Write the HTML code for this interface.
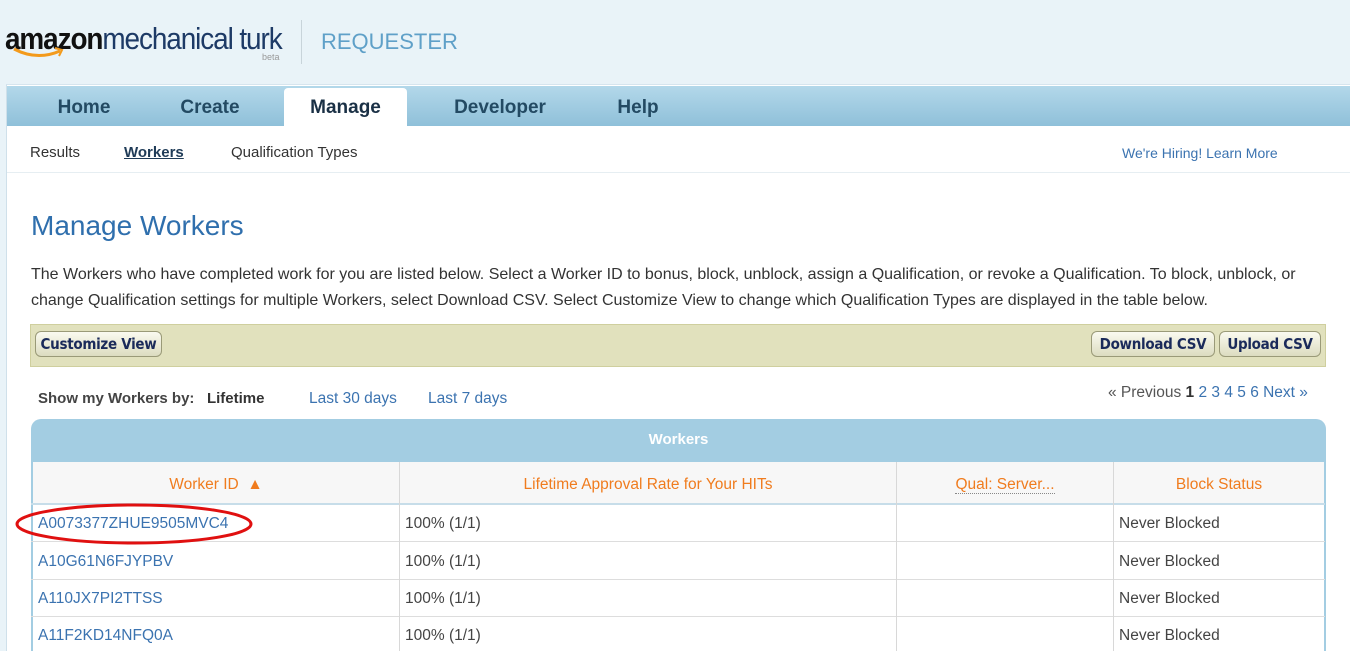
<!DOCTYPE html>
<html><head><style>
*{margin:0;padding:0;box-sizing:border-box}
body{width:1350px;height:651px;overflow:hidden;background:#e9f3f8;font-family:"Liberation Sans",Arial,sans-serif;position:relative}
.abs{position:absolute}
.panel{left:6px;top:84px;width:1344px;height:567px;background:#fff;border-left:1px solid #cfe0ea;border-top:1px solid #d6e5ee}
.nav{left:7px;top:86px;width:1343px;height:40px;background:linear-gradient(#b3d8ea,#8fc0d9)}
.tab{top:0;height:40px;line-height:44px;font-size:19px;font-weight:bold;color:#234a63;text-align:center}
.sub{font-size:15px;color:#333;top:144px}
.btn{top:331px;height:26px;border:1px solid #9a9a78;border-radius:6px;background:linear-gradient(#fafaf0,#dcdcc0);font-family:"DejaVu Sans Condensed","Liberation Sans Narrow",sans-serif;font-size:15px;color:#1a2a5a;line-height:24px;text-align:center;font-weight:bold;letter-spacing:-0.3px}
.td{font-size:15.5px;color:#444;}
.hl{position:absolute;height:1px;background:#c7dde9;left:31px;width:1294px}
.vl{position:absolute;width:1px;background:#d8d8d8;top:462px;height:189px}
.h{color:#f07c1e;font-size:15.5px;top:476px;text-align:center}
</style></head><body>
<div class="abs" style="left:5px;top:21px;font-size:31px;letter-spacing:-1.2px;font-weight:bold;color:#111;transform:scaleX(.9);transform-origin:left">amazon<span style="font-weight:normal;color:#1d3a66">mechanical turk</span></div>
<svg class="abs" style="left:12px;top:45px" width="60" height="16"><path d="M2 4 Q25 16 48 6" stroke="#f39a1c" stroke-width="3" fill="none"/><path d="M43 3 L50 5 L47 11" stroke="#f39a1c" stroke-width="2" fill="none"/></svg>
<div class="abs" style="left:262px;top:52px;font-size:9px;color:#999">beta</div>
<div class="abs" style="left:301px;top:20px;width:1px;height:44px;background:#c8d4da"></div>
<div class="abs" style="left:321px;top:29px;font-size:22px;color:#5fa0c8">REQUESTER</div>
<div class="abs panel"></div>
<div class="abs nav">
<div class="abs tab" style="left:30px;width:94px">Home</div>
<div class="abs tab" style="left:158px;width:90px">Create</div>
<div class="abs tab" style="left:277px;top:2px;height:38px;line-height:40px;width:123px;background:#fff;border-radius:4px 4px 0 0;color:#1a3045">Manage</div>
<div class="abs tab" style="left:430px;width:126px">Developer</div>
<div class="abs tab" style="left:600px;width:62px">Help</div>
</div>
<div class="abs sub" style="left:30px">Results</div>
<div class="abs sub" style="left:124px;font-weight:bold;text-decoration:underline;color:#1f3b57">Workers</div>
<div class="abs sub" style="left:231px">Qualification Types</div>
<div class="abs" style="left:1122px;top:145px;font-size:14px;color:#3b73b0">We're Hiring! Learn More</div>
<div class="abs" style="left:7px;top:172px;width:1343px;height:1px;background:#e6eef2"></div>
<div class="abs" style="left:31px;top:210px;font-size:28px;color:#2f6fad">Manage Workers</div>
<div class="abs" style="left:31px;top:262px;font-size:16px;color:#333;line-height:26px;width:1285px">The Workers who have completed work for you are listed below. Select a Worker ID to bonus, block, unblock, assign a Qualification, or revoke a Qualification. To block, unblock, or change Qualification settings for multiple Workers, select Download CSV. Select Customize View to change which Qualification Types are displayed in the table below.</div>
<div class="abs" style="left:30px;top:324px;width:1296px;height:43px;background:#e1e1bd;border:1px solid #cfcf9e"></div>
<div class="abs btn" style="left:35px;width:127px">Customize View</div>
<div class="abs btn" style="left:1091px;width:124px">Download CSV</div>
<div class="abs btn" style="left:1219px;width:102px">Upload CSV</div>
<div class="abs" style="left:38px;top:390px;font-size:15px;font-weight:bold;color:#444">Show my Workers by:&nbsp;&nbsp; <span style="color:#333">Lifetime</span></div>
<div class="abs" style="left:309px;top:390px;font-size:15.5px;color:#3b73b0">Last 30 days</div>
<div class="abs" style="left:428px;top:390px;font-size:15.5px;color:#3b73b0">Last 7 days</div>
<div class="abs" style="left:1108px;top:384px;font-size:15.5px;color:#555">« Previous <b style="color:#333">1</b> <span style="color:#3b73b0">2 3 4 5 6 Next »</span></div>
<div class="abs" style="left:31px;top:419px;width:1295px;height:232px;background:#a3cde2;border-radius:10px 10px 0 0"></div>
<div class="abs" style="left:31px;top:431px;width:1295px;text-align:center;color:#fff;font-weight:bold;font-size:15px">Workers</div>
<div class="abs" style="left:33px;top:462px;width:1291px;height:189px;background:#fff"></div>
<div class="abs" style="left:33px;top:462px;width:1291px;height:41px;background:#f7f7f7"></div>
<div class="hl" style="top:503px;height:2px"></div>
<div class="hl" style="top:541px;background:#ddd"></div>
<div class="hl" style="top:579px;background:#ddd"></div>
<div class="hl" style="top:616px;background:#ddd"></div>
<div class="vl" style="left:399px"></div><div class="vl" style="left:896px"></div><div class="vl" style="left:1113px"></div>
<div class="abs h" style="left:33px;width:366px">Worker ID &nbsp;▲</div>
<div class="abs h" style="left:400px;width:496px">Lifetime Approval Rate for Your HITs</div>
<div class="abs h" style="left:897px;width:216px"><span style="border-bottom:1px dotted #888">Qual: Server...</span></div>
<div class="abs h" style="left:1114px;width:210px">Block Status</div>
<div class="abs td" style="left:38px;top:515px;color:#3b73b0">A0073377ZHUE9505MVC4</div>
<div class="abs td" style="left:38px;top:553px;color:#3b73b0">A10G61N6FJYPBV</div>
<div class="abs td" style="left:38px;top:590px;color:#3b73b0">A110JX7PI2TTSS</div>
<div class="abs td" style="left:38px;top:627px;color:#3b73b0">A11F2KD14NFQ0A</div>
<div class="abs td" style="left:405px;top:515px">100% (1/1)</div>
<div class="abs td" style="left:405px;top:553px">100% (1/1)</div>
<div class="abs td" style="left:405px;top:590px">100% (1/1)</div>
<div class="abs td" style="left:405px;top:627px">100% (1/1)</div>
<div class="abs td" style="left:1119px;top:515px">Never Blocked</div>
<div class="abs td" style="left:1119px;top:553px">Never Blocked</div>
<div class="abs td" style="left:1119px;top:590px">Never Blocked</div>
<div class="abs td" style="left:1119px;top:627px">Never Blocked</div>
<svg class="abs" style="left:8px;top:501px" width="250" height="48"><ellipse cx="126" cy="23" rx="117" ry="19" fill="none" stroke="#e01010" stroke-width="3"/></svg>
</body></html>
